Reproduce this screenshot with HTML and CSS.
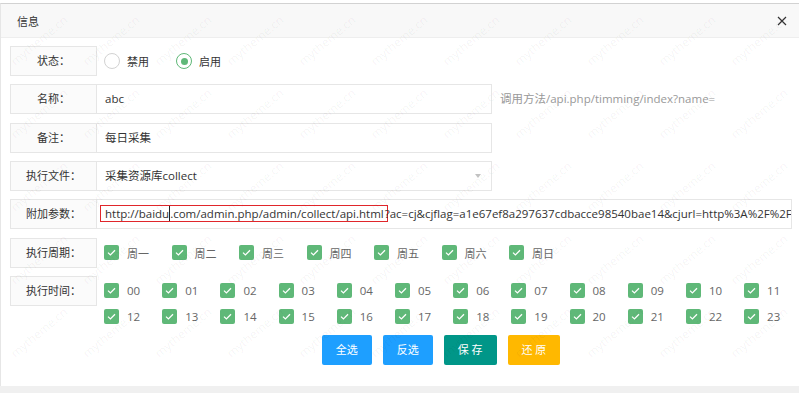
FILE: index.html
```html
<!DOCTYPE html>
<html lang="zh-CN">
<head>
<meta charset="utf-8">
<title>信息</title>
<link rel="stylesheet" href="styles.css">
</head>
<body>
<div class="page">
  <div class="layer">
    <div class="layer-title">
      <span class="title-text">信息</span>
      <span class="layer-close"><svg width="10" height="10" viewBox="0 0 10 10"><path d="M1 1L9 9M9 1L1 9" stroke="#333" stroke-width="1.2" fill="none"/></svg></span>
    </div>
    <div class="layer-content">
      <div class="item">
        <div class="label">状态：</div>
        <div class="radios">
          <span class="radio"><i class="ring"></i><span>禁用</span></span>
          <span class="radio on"><i class="ring"></i><span>启用</span></span>
        </div>
      </div>
      <div class="item">
        <div class="label">名称：</div>
        <div class="input">abc</div>
        <div class="aux">调用方法/api.php/timming/index?name=</div>
      </div>
      <div class="item">
        <div class="label">备注：</div>
        <div class="input">每日采集</div>
      </div>
      <div class="item">
        <div class="label">执行文件：</div>
        <div class="input select">采集资源库collect<i class="arrow"></i></div>
      </div>
      <div class="item">
        <div class="label">附加参数：</div>
        <div class="input wide"><span class="mark">http://baidu<i class="caret"></i>.com/admin.php/admin/collect/api.html</span>?ac=cj&amp;cjflag=a1e67ef8a297637cdbacce98540bae14&amp;cjurl=http%3A%2F%2F</div>
      </div>
      <div class="item">
        <div class="label">执行周期：</div>
        <div class="checks week">
          <span class="cb"><i class="box"><svg width="15" height="15" viewBox="0 0 15 15"><path d="M4 7.6L6.4 9.9L11 5.2" stroke="#fff" stroke-width="1.3" fill="none"/></svg></i>周一</span>
          <span class="cb"><i class="box"><svg width="15" height="15" viewBox="0 0 15 15"><path d="M4 7.6L6.4 9.9L11 5.2" stroke="#fff" stroke-width="1.3" fill="none"/></svg></i>周二</span>
          <span class="cb"><i class="box"><svg width="15" height="15" viewBox="0 0 15 15"><path d="M4 7.6L6.4 9.9L11 5.2" stroke="#fff" stroke-width="1.3" fill="none"/></svg></i>周三</span>
          <span class="cb"><i class="box"><svg width="15" height="15" viewBox="0 0 15 15"><path d="M4 7.6L6.4 9.9L11 5.2" stroke="#fff" stroke-width="1.3" fill="none"/></svg></i>周四</span>
          <span class="cb"><i class="box"><svg width="15" height="15" viewBox="0 0 15 15"><path d="M4 7.6L6.4 9.9L11 5.2" stroke="#fff" stroke-width="1.3" fill="none"/></svg></i>周五</span>
          <span class="cb"><i class="box"><svg width="15" height="15" viewBox="0 0 15 15"><path d="M4 7.6L6.4 9.9L11 5.2" stroke="#fff" stroke-width="1.3" fill="none"/></svg></i>周六</span>
          <span class="cb"><i class="box"><svg width="15" height="15" viewBox="0 0 15 15"><path d="M4 7.6L6.4 9.9L11 5.2" stroke="#fff" stroke-width="1.3" fill="none"/></svg></i>周日</span>
        </div>
      </div>
      <div class="item hours-item">
        <div class="label">执行时间：</div>
        <div class="checks hours">
          <span class="cb"><i class="box"><svg width="15" height="15" viewBox="0 0 15 15"><path d="M4 7.6L6.4 9.9L11 5.2" stroke="#fff" stroke-width="1.3" fill="none"/></svg></i>00</span>
          <span class="cb"><i class="box"><svg width="15" height="15" viewBox="0 0 15 15"><path d="M4 7.6L6.4 9.9L11 5.2" stroke="#fff" stroke-width="1.3" fill="none"/></svg></i>01</span>
          <span class="cb"><i class="box"><svg width="15" height="15" viewBox="0 0 15 15"><path d="M4 7.6L6.4 9.9L11 5.2" stroke="#fff" stroke-width="1.3" fill="none"/></svg></i>02</span>
          <span class="cb"><i class="box"><svg width="15" height="15" viewBox="0 0 15 15"><path d="M4 7.6L6.4 9.9L11 5.2" stroke="#fff" stroke-width="1.3" fill="none"/></svg></i>03</span>
          <span class="cb"><i class="box"><svg width="15" height="15" viewBox="0 0 15 15"><path d="M4 7.6L6.4 9.9L11 5.2" stroke="#fff" stroke-width="1.3" fill="none"/></svg></i>04</span>
          <span class="cb"><i class="box"><svg width="15" height="15" viewBox="0 0 15 15"><path d="M4 7.6L6.4 9.9L11 5.2" stroke="#fff" stroke-width="1.3" fill="none"/></svg></i>05</span>
          <span class="cb"><i class="box"><svg width="15" height="15" viewBox="0 0 15 15"><path d="M4 7.6L6.4 9.9L11 5.2" stroke="#fff" stroke-width="1.3" fill="none"/></svg></i>06</span>
          <span class="cb"><i class="box"><svg width="15" height="15" viewBox="0 0 15 15"><path d="M4 7.6L6.4 9.9L11 5.2" stroke="#fff" stroke-width="1.3" fill="none"/></svg></i>07</span>
          <span class="cb"><i class="box"><svg width="15" height="15" viewBox="0 0 15 15"><path d="M4 7.6L6.4 9.9L11 5.2" stroke="#fff" stroke-width="1.3" fill="none"/></svg></i>08</span>
          <span class="cb"><i class="box"><svg width="15" height="15" viewBox="0 0 15 15"><path d="M4 7.6L6.4 9.9L11 5.2" stroke="#fff" stroke-width="1.3" fill="none"/></svg></i>09</span>
          <span class="cb"><i class="box"><svg width="15" height="15" viewBox="0 0 15 15"><path d="M4 7.6L6.4 9.9L11 5.2" stroke="#fff" stroke-width="1.3" fill="none"/></svg></i>10</span>
          <span class="cb"><i class="box"><svg width="15" height="15" viewBox="0 0 15 15"><path d="M4 7.6L6.4 9.9L11 5.2" stroke="#fff" stroke-width="1.3" fill="none"/></svg></i>11</span>
          <span class="cb"><i class="box"><svg width="15" height="15" viewBox="0 0 15 15"><path d="M4 7.6L6.4 9.9L11 5.2" stroke="#fff" stroke-width="1.3" fill="none"/></svg></i>12</span>
          <span class="cb"><i class="box"><svg width="15" height="15" viewBox="0 0 15 15"><path d="M4 7.6L6.4 9.9L11 5.2" stroke="#fff" stroke-width="1.3" fill="none"/></svg></i>13</span>
          <span class="cb"><i class="box"><svg width="15" height="15" viewBox="0 0 15 15"><path d="M4 7.6L6.4 9.9L11 5.2" stroke="#fff" stroke-width="1.3" fill="none"/></svg></i>14</span>
          <span class="cb"><i class="box"><svg width="15" height="15" viewBox="0 0 15 15"><path d="M4 7.6L6.4 9.9L11 5.2" stroke="#fff" stroke-width="1.3" fill="none"/></svg></i>15</span>
          <span class="cb"><i class="box"><svg width="15" height="15" viewBox="0 0 15 15"><path d="M4 7.6L6.4 9.9L11 5.2" stroke="#fff" stroke-width="1.3" fill="none"/></svg></i>16</span>
          <span class="cb"><i class="box"><svg width="15" height="15" viewBox="0 0 15 15"><path d="M4 7.6L6.4 9.9L11 5.2" stroke="#fff" stroke-width="1.3" fill="none"/></svg></i>17</span>
          <span class="cb"><i class="box"><svg width="15" height="15" viewBox="0 0 15 15"><path d="M4 7.6L6.4 9.9L11 5.2" stroke="#fff" stroke-width="1.3" fill="none"/></svg></i>18</span>
          <span class="cb"><i class="box"><svg width="15" height="15" viewBox="0 0 15 15"><path d="M4 7.6L6.4 9.9L11 5.2" stroke="#fff" stroke-width="1.3" fill="none"/></svg></i>19</span>
          <span class="cb"><i class="box"><svg width="15" height="15" viewBox="0 0 15 15"><path d="M4 7.6L6.4 9.9L11 5.2" stroke="#fff" stroke-width="1.3" fill="none"/></svg></i>20</span>
          <span class="cb"><i class="box"><svg width="15" height="15" viewBox="0 0 15 15"><path d="M4 7.6L6.4 9.9L11 5.2" stroke="#fff" stroke-width="1.3" fill="none"/></svg></i>21</span>
          <span class="cb"><i class="box"><svg width="15" height="15" viewBox="0 0 15 15"><path d="M4 7.6L6.4 9.9L11 5.2" stroke="#fff" stroke-width="1.3" fill="none"/></svg></i>22</span>
          <span class="cb"><i class="box"><svg width="15" height="15" viewBox="0 0 15 15"><path d="M4 7.6L6.4 9.9L11 5.2" stroke="#fff" stroke-width="1.3" fill="none"/></svg></i>23</span>
        </div>
      </div>
      <div class="btn-row">
        <span class="btn blue">全选</span>
        <span class="btn blue">反选</span>
        <span class="btn teal">保 存</span>
        <span class="btn orange">还 原</span>
      </div>
    </div>
  </div>
  <div class="band"></div>
  <div class="watermark">
    <span>mytheme.cn</span><span>mytheme.cn</span><span>mytheme.cn</span><span>mytheme.cn</span><span>mytheme.cn</span><span>mytheme.cn</span><span>mytheme.cn</span><span>mytheme.cn</span><span>mytheme.cn</span><span>mytheme.cn</span><span>mytheme.cn</span>
    <span>mytheme.cn</span><span>mytheme.cn</span><span>mytheme.cn</span><span>mytheme.cn</span><span>mytheme.cn</span><span>mytheme.cn</span><span>mytheme.cn</span><span>mytheme.cn</span><span>mytheme.cn</span><span>mytheme.cn</span><span>mytheme.cn</span>
    <span>mytheme.cn</span><span>mytheme.cn</span><span>mytheme.cn</span><span>mytheme.cn</span><span>mytheme.cn</span><span>mytheme.cn</span><span>mytheme.cn</span><span>mytheme.cn</span><span>mytheme.cn</span><span>mytheme.cn</span><span>mytheme.cn</span>
    <span>mytheme.cn</span><span>mytheme.cn</span><span>mytheme.cn</span><span>mytheme.cn</span><span>mytheme.cn</span><span>mytheme.cn</span><span>mytheme.cn</span><span>mytheme.cn</span><span>mytheme.cn</span><span>mytheme.cn</span><span>mytheme.cn</span>
    <span>mytheme.cn</span><span>mytheme.cn</span><span>mytheme.cn</span><span>mytheme.cn</span><span>mytheme.cn</span><span>mytheme.cn</span><span>mytheme.cn</span><span>mytheme.cn</span><span>mytheme.cn</span><span>mytheme.cn</span><span>mytheme.cn</span>
  </div>
</div>
</body>
</html>
```

FILE: styles.css
```css
* { box-sizing: border-box; }
html, body { margin: 0; padding: 0; background: #fff; }
body {
  font-family: "Open Sans", "Noto Sans CJK SC", sans-serif;
  color: #333;
  font-size: 11px;
}
.page {
  position: relative;
  width: 799px;
  height: 393px;
  overflow: hidden;
  padding-top: 3px;
}
.layer {
  height: 383px;
  border-top: 1px solid #d2d2d2;
  border-left: 1px solid #e6e6e6;
  background: #fff;
  display: flex;
  flex-direction: column;
}
.band { height: 7px; background: #f0f0f0; }
.layer-title {
  height: 34px;
  background: #f8f8f8;
  border-bottom: 1px solid #eee;
  display: flex;
  align-items: center;
  justify-content: space-between;
  padding: 0 12px 0 16px;
  font-size: 11px;
  color: #333;
}
.layer-close { display: flex; width: 10px; height: 10px; margin-top: 1px; }
.layer-content { padding: 8px 0 0 9px; }
.item { display: flex; height: 30px; margin-bottom: 8.33px; }
.hours-item { height: auto; margin-bottom: 0; }
.label {
  flex: none;
  width: 87px;
  height: 30px;
  border: 1px solid #e6e6e6;
  background: #fbfbfb;
  text-align: center;
  line-height: 28px;
  font-size: 11px;
  color: #333;
}
.input {
  position: relative;
  flex: none;
  margin-left: -1px;
  width: 396px;
  height: 30px;
  border: 1px solid #e6e6e6;
  padding-left: 8px;
  line-height: 28px;
  font-size: 11.5px;
  color: #333;
  background: #fff;
  white-space: nowrap;
  overflow: hidden;
}
.input.wide { width: 696px; }
.arrow {
  position: absolute;
  right: 10px;
  top: 12px;
  width: 0;
  height: 0;
  border-top: 4px solid #c2c2c2;
  border-left: 3px solid transparent;
  border-right: 3px solid transparent;
}
.mark {
  border: 1px solid #e0262b;
  padding: 0 3px 0 4px;
  margin: 0 -3px 0 -5px;
}
.caret {
  display: inline-block;
  width: 1px;
  height: 15px;
  background: #222;
  vertical-align: -3px;
}
.aux {
  margin-left: 8px;
  line-height: 30px;
  font-size: 11.5px;
  color: #999;
}
.radios { display: flex; align-items: center; padding-left: 7px; }
.radio { display: flex; align-items: center; margin-right: 27px; font-size: 11px; color: #333; }
.ring {
  width: 16px;
  height: 16px;
  border: 1px solid #d2d2d2;
  border-radius: 50%;
  margin-right: 7px;
  display: flex;
  align-items: center;
  justify-content: center;
  background: #fff;
}
.radio.on .ring { border-color: #5fb878; }
.radio.on .ring::after {
  content: "";
  width: 7px;
  height: 7px;
  border-radius: 50%;
  background: #5fb878;
}
.checks { display: grid; padding-left: 7px; align-items: center; }
.week { grid-template-columns: repeat(7, 67.5px); }
.hours { grid-template-columns: repeat(12, 58.2px); grid-auto-rows: 26px; padding-top: 2px; }
.cb { display: flex; align-items: center; color: #666; font-size: 11px; white-space: nowrap; }
.hours .cb { font-size: 11.5px; }
.box {
  flex: none;
  width: 15px;
  height: 15px;
  border-radius: 2px;
  background: #5fb878;
  margin-right: 8px;
  display: flex;
}
.btn-row {
  display: flex;
  justify-content: center;
  gap: 11px;
  margin: 5px 0 0 83px;
  width: 696px;
}
.btn {
  height: 30px;
  line-height: 30px;
  padding: 0 14px;
  border-radius: 2px;
  color: #fff;
  font-size: 11px;
}
.blue { background: #1e9fff; }
.teal { background: #009688; }
.orange { background: #ffb800; }
.watermark {
  position: absolute;
  left: 3px;
  top: 4px;
  display: grid;
  grid-template-columns: repeat(11, 72px);
  grid-auto-rows: 73px;
  pointer-events: none;
}
.watermark span {
  display: flex;
  align-items: center;
  justify-content: center;
  transform: rotate(-40deg);
  color: rgba(0, 0, 0, 0.05);
  font-size: 12px;
  white-space: nowrap;
}
```
